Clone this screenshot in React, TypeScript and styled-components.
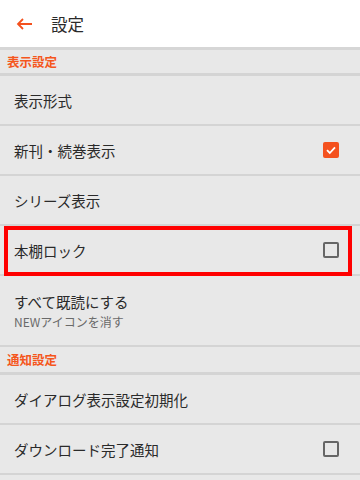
import { createGlobalStyle, styled } from 'styled-components';

const GlobalStyle = createGlobalStyle`
  html, body {
    margin: 0;
    padding: 0;
    background: #e8e8e8;
  }
  body {
    font-family: "Noto Sans CJK JP", "Noto Sans", sans-serif;
    color: #2a2a2a;
  }
`;

const Page = styled.div`
  width: 360px;
  height: 480px;
  overflow: hidden;
  background: #e8e8e8;
`;

const AppBar = styled.header`
  display: flex;
  align-items: center;
  height: 47px;
  background: #fff;
  border-bottom: 3px solid #d6d6d6;
  padding-left: 14px;
  gap: 17px;
`;

const BackButton = styled.button`
  display: flex;
  align-items: center;
  justify-content: center;
  width: 20px;
  height: 20px;
  padding: 0;
  border: 0;
  background: none;
`;

const Title = styled.h1`
  margin: 0;
  font-size: 16.5px;
  font-weight: 400;
  color: #2a2a2a;
`;

const SectionHeader = styled.div<{ $height: number }>`
  display: flex;
  align-items: center;
  height: ${(p) => p.$height}px;
  padding-left: 7px;
  font-size: 12.5px;
  font-weight: 700;
  color: #f5561c;
  border-bottom: 3px solid #d4d4d4;
`;

const Row = styled.div<{ $height?: number; $highlight?: boolean }>`
  position: relative;
  display: flex;
  align-items: center;
  justify-content: space-between;
  height: ${(p) => p.$height ?? 48}px;
  padding: 0 21px 0 14px;
  border-bottom: 2px solid #d4d4d4;

  ${(p) =>
    p.$highlight &&
    `
    &::after {
      content: '';
      position: absolute;
      top: 0;
      left: 4px;
      right: 8px;
      bottom: -2px;
      border: 4px solid #ff0000;
      pointer-events: none;
    }
  `}
`;

const Labels = styled.div`
  display: flex;
  flex-direction: column;
  gap: 1px;
`;

const Label = styled.span`
  font-size: 14.5px;
  color: #2a2a2a;
`;

const SubLabel = styled.span`
  font-size: 12px;
  color: #6a6a6a;
`;

const Check = styled.span<{ $checked?: boolean }>`
  display: flex;
  align-items: center;
  justify-content: center;
  width: 16px;
  height: 16px;
  box-sizing: border-box;
  border-radius: 2px;
  border: ${(p) => (p.$checked ? 'none' : '2px solid #666')};
  background: ${(p) => (p.$checked ? '#f4511e' : 'transparent')};
`;

function CheckBox({ checked }: { checked?: boolean }) {
  return (
    <Check $checked={checked}>
      {checked && (
        <svg width="12" height="12" viewBox="0 0 12 12">
          <path d="M2 6.2 L4.8 9 L10 3.4" stroke="#fff" strokeWidth="1.8" fill="none" />
        </svg>
      )}
    </Check>
  );
}

export default function App() {
  return (
    <Page>
      <GlobalStyle />
      <AppBar>
        <BackButton type="button">
          <svg width="18" height="14" viewBox="0 0 18 14">
            <path d="M17 7 H3 M8 2 L3 7 L8 12" stroke="#f4511e" strokeWidth="1.8" fill="none" />
          </svg>
        </BackButton>
        <Title>設定</Title>
      </AppBar>

      <SectionHeader $height={23}>表示設定</SectionHeader>
      <Row>
        <Label>表示形式</Label>
      </Row>
      <Row>
        <Label>新刊・続巻表示</Label>
        <CheckBox checked />
      </Row>
      <Row>
        <Label>シリーズ表示</Label>
      </Row>
      <Row $highlight>
        <Label>本棚ロック</Label>
        <CheckBox />
      </Row>
      <Row $height={69}>
        <Labels>
          <Label>すべて既読にする</Label>
          <SubLabel>NEWアイコンを消す</SubLabel>
        </Labels>
      </Row>

      <SectionHeader $height={25}>通知設定</SectionHeader>
      <Row>
        <Label>ダイアログ表示設定初期化</Label>
      </Row>
      <Row>
        <Label>ダウンロード完了通知</Label>
        <CheckBox />
      </Row>
    </Page>
  );
}
